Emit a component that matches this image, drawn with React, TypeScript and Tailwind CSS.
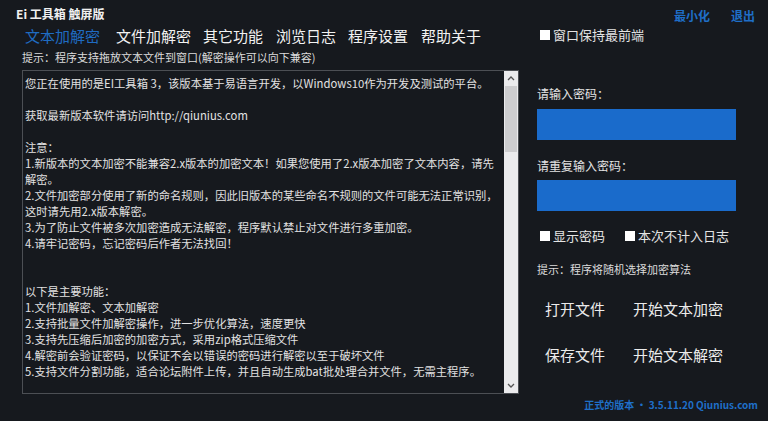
import type { ReactNode } from 'react'

const TABS = [
  { label: '文本加解密', active: true, cls: '' },
  { label: '文件加解密', active: false, cls: 'ml-[16px]' },
  { label: '其它功能', active: false, cls: 'ml-[12px]' },
  { label: '浏览日志', active: false, cls: 'ml-[13px]' },
  { label: '程序设置', active: false, cls: 'ml-[12px]' },
  { label: '帮助关于', active: false, cls: 'ml-[13px]' },
]

const NOTES = [
  '您正在使用的是EI工具箱 3，该版本基于易语言开发，以Windows10作为开发及测试的平台。',
  '',
  '获取最新版本软件请访问http://qiunius.com',
  '',
  '注意：',
  '1.新版本的文本加密不能兼容2.x版本的加密文本！如果您使用了2.x版本加密了文本内容，请先',
  '解密。',
  '2.文件加密部分使用了新的命名规则，因此旧版本的某些命名不规则的文件可能无法正常识别，',
  '这时请先用2.x版本解密。',
  '3.为了防止文件被多次加密造成无法解密，程序默认禁止对文件进行多重加密。',
  '4.请牢记密码，忘记密码后作者无法找回！',
  '',
  '',
  '以下是主要功能：',
  '1.文件加解密、文本加解密',
  '2.支持批量文件加解密操作，进一步优化算法，速度更快',
  '3.支持先压缩后加密的加密方式，采用zip格式压缩文件',
  '4.解密前会验证密码，以保证不会以错误的密码进行解密以至于破坏文件',
  '5.支持文件分割功能，适合论坛附件上传，并且自动生成bat批处理合并文件，无需主程序。',
]

function Check({ children, className = '' }: { children: ReactNode; className?: string }) {
  return (
    <label className={`flex items-center gap-[3px] text-[13px] leading-[16px] text-[#e4e4e4] ${className}`}>
      <span className="w-[10px] h-[10px] bg-white inline-block" />
      {children}
    </label>
  )
}

function ScrollBar() {
  return (
    <div className="w-[14px] h-full bg-[#ebebed] flex flex-col shrink-0">
      <div className="h-[15px] flex items-center justify-center">
        <svg width="8" height="5" viewBox="0 0 8 5">
          <path d="M1 4 L4 1 L7 4" stroke="#555" strokeWidth="1.3" fill="none" />
        </svg>
      </div>
      <div className="mx-[1px] h-[66px] bg-[#cdcdcf]" />
      <div className="flex-1" />
      <div className="h-[15px] flex items-center justify-center">
        <svg width="8" height="5" viewBox="0 0 8 5">
          <path d="M1 1 L4 4 L7 1" stroke="#555" strokeWidth="1.3" fill="none" />
        </svg>
      </div>
    </div>
  )
}

export default function App() {
  return (
    <div
      className="w-[768px] h-[421px] bg-[#16191e] flex overflow-hidden text-[#e4e4e4]"
      style={{ fontFamily: '"Noto Sans CJK SC", "Noto Sans", sans-serif' }}
    >
      {/* Left: title, tabs, text area */}
      <div className="w-[520px] pl-[16px] flex flex-col">
        <div className="mt-[6px] text-[12px] leading-[16px] font-bold text-[#f0f0f0]">Ei 工具箱 触屏版</div>

        <div className="mt-[4px] pl-[9px] flex text-[15px] leading-[20px]">
          {TABS.map((tab) => (
            <span key={tab.label} className={`${tab.cls} ${tab.active ? 'text-[#1f6cc2]' : 'text-[#f2f2f2]'}`}>
              {tab.label}
            </span>
          ))}
        </div>

        <div className="mt-[3px] pl-[6px] text-[11px] leading-[16px] text-[#dcdcdc]">
          提示：程序支持拖放文本文件到窗口(解密操作可以向下兼容)
        </div>

        <div className="mt-[5px] ml-[6px] w-[497px] h-[324px] border-[1.5px] border-[#4c4f54] flex">
          <div className="flex-1 pl-[2px] pt-[4px] overflow-hidden">
            {NOTES.map((line, i) => (
              <div key={i} className="h-[16px] text-[11.3px] leading-[16px] whitespace-nowrap text-[#e2e2e2]">
                {line}
              </div>
            ))}
          </div>
          <ScrollBar />
        </div>
      </div>

      {/* Right: window actions, password form, buttons */}
      <div className="flex-1 flex flex-col pl-[17px]">
        <div className="mt-[8px] h-[16px] flex justify-end gap-[21px] pr-[13px] text-[12px] leading-[16px] font-bold text-[#1f6fc8]">
          <span>最小化</span>
          <span>退出</span>
        </div>

        <Check className="mt-[3px] ml-[3px]">窗口保持最前端</Check>

        <div className="mt-[43px] text-[12px] leading-[16px]">请输入密码：</div>
        <div className="mt-[7px] w-[199px] h-[31px] bg-[#1a6bcb]" />

        <div className="mt-[18px] text-[12px] leading-[16px]">请重复输入密码：</div>
        <div className="mt-[6px] w-[199px] h-[31px] bg-[#1a6bcb]" />

        <div className="mt-[17px] ml-[3px] flex gap-[20px]">
          <Check>显示密码</Check>
          <Check>本次不计入日志</Check>
        </div>

        <div className="mt-[17px] text-[11px] leading-[16px] text-[#dcdcdc]">提示：程序将随机选择加密算法</div>

        <div className="mt-[22px] grid grid-cols-[88px_auto] gap-y-[26px] text-[15px] leading-[20px] text-[#ececec] pl-[8px]">
          <span>打开文件</span>
          <span>开始文本加密</span>
          <span>保存文件</span>
          <span>开始文本解密</span>
        </div>

        <div className="mt-auto mb-[8px] pr-[10px] text-right text-[10px] leading-[16px] font-bold text-[#1f6fc8]">
          正式的版本 · 3.5.11.20 Qiunius.com
        </div>
      </div>
    </div>
  )
}
